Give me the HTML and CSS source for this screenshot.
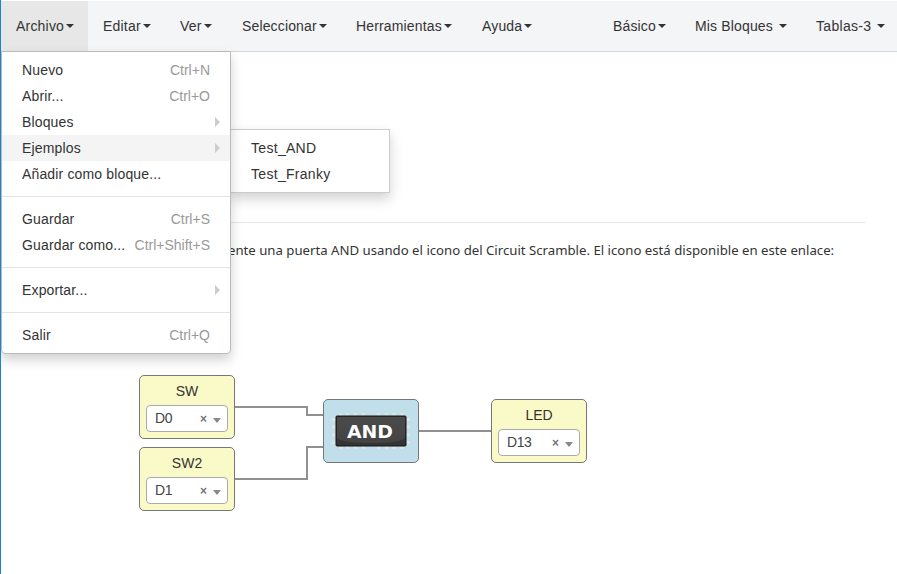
FILE: index.html
```html
<!DOCTYPE html>
<html lang="es">
<head>
<meta charset="utf-8">
<title>Editor de bloques</title>
<link rel="stylesheet" href="styles.css">
</head>
<body>
<div class="window">
  <nav class="navbar">
    <div class="nav-group">
      <a class="nav-item active">Archivo<i class="caret"></i></a>
      <a class="nav-item editar">Editar<i class="caret"></i></a>
      <a class="nav-item ver">Ver<i class="caret"></i></a>
      <a class="nav-item seleccionar">Seleccionar<i class="caret"></i></a>
      <a class="nav-item herramientas">Herramientas<i class="caret"></i></a>
      <a class="nav-item ayuda">Ayuda<i class="caret"></i></a>
    </div>
    <div class="nav-group right">
      <a class="nav-item basico">Básico<i class="caret"></i></a>
      <a class="nav-item bloques">Mis Bloques<i class="caret wide"></i></a>
      <a class="nav-item tablas">Tablas-3<i class="caret wide"></i></a>
    </div>
  </nav>

  <main class="canvas">
    <hr class="rule">
    <p class="note">ente una puerta AND usando el icono del Circuit Scramble. El icono está disponible en este enlace:</p>

    <svg class="wires" width="897" height="522" viewBox="0 52 897 522">
      <path d="M235 407H307V415H323M235 479H307V447H323M419 431H491"/>
    </svg>
    <div class="node io sw">
      <span class="label">SW</span>
      <div class="select"><span>D0</span><b>×</b><i class="arrow"></i></div>
    </div>
    <div class="node io sw2">
      <span class="label">SW2</span>
      <div class="select"><span>D1</span><b>×</b><i class="arrow"></i></div>
    </div>
    <div class="node gate">
      <svg width="94" height="62" viewBox="324 400 94 62">
        <defs>
          <linearGradient id="chip" x1="0" y1="0" x2="0" y2="1"><stop offset="0" stop-color="#4b4b4b"/><stop offset="1" stop-color="#434343"/></linearGradient>
        </defs>
        <path class="pins" d="M341 413V449M347.500 413V449M355.500 413V449M363.500 413V449M378.500 413V449M386.500 413V449M394 413V449M402 413V449M332 419.500H410M332 427H410M332 435H410M332 442.500H410"/>
        <rect x="336" y="416" width="70" height="30" rx="1" fill="#343434"/>
        <path d="M337 417H405V438Q400 443 371 443Q342 443 337 438Z" fill="url(#chip)"/>
        <rect x="336" y="416" width="70" height="30" rx="1" fill="none" stroke="#151515"/>
        <text class="gate-name" x="347" y="437.500" textLength="46" lengthAdjust="spacingAndGlyphs">AND</text>
      </svg>
    </div>
    <div class="node io led">
      <span class="label">LED</span>
      <div class="select"><span>D13</span><b>×</b><i class="arrow"></i></div>
    </div>
  </main>

  <div class="submenu">
    <div class="submenu-item">Test_AND</div>
    <div class="submenu-item">Test_Franky</div>
  </div>
  <div class="menu">
    <div class="menu-item"><span>Nuevo</span><kbd>Ctrl+N</kbd></div>
    <div class="menu-item"><span>Abrir...</span><kbd>Ctrl+O</kbd></div>
    <div class="menu-item"><span>Bloques</span><i class="more"></i></div>
    <div class="menu-item hover"><span>Ejemplos</span><i class="more"></i></div>
    <div class="menu-item"><span>Añadir como bloque...</span></div>
    <div class="divider"></div>
    <div class="menu-item"><span>Guardar</span><kbd>Ctrl+S</kbd></div>
    <div class="menu-item"><span>Guardar como...</span><kbd>Ctrl+Shift+S</kbd></div>
    <div class="divider"></div>
    <div class="menu-item"><span>Exportar...</span><i class="more"></i></div>
    <div class="divider"></div>
    <div class="menu-item"><span>Salir</span><kbd>Ctrl+Q</kbd></div>
  </div>
</div>
</body>
</html>
```
FILE: styles.css
```css
* { box-sizing: border-box; }
body {
  margin: 0;
  background: #fff;
  color: #333;
  font: 14px/20px "Liberation Sans", Arial, sans-serif;
}
.window {
  position: relative;
  height: 574px;
  overflow: hidden;
  border-left: 1px solid #1883d7;
}
.navbar {
  display: flex;
  justify-content: space-between;
  height: 52px;
  padding-top: 1px;
  border-bottom: 1px solid #d3d6da;
  background: #f4f5f7 content-box;
}
.nav-group { display: flex; }
.nav-item {
  display: flex;
  align-items: center;
  padding-left: 15px;
  letter-spacing: 0.15px;
  white-space: nowrap;
}
.active { width: 87px; background: #e7e7e7; }
.editar { width: 77px; }
.ver { width: 62px; }
.seleccionar { width: 114px; }
.herramientas { width: 126px; }
.ayuda { width: 80px; }
.basico { width: 82px; }
.bloques { width: 121px; }
.tablas { width: 96px; letter-spacing: 0.3px; }
.active, .editar, .ver { letter-spacing: 0.2px; }
.caret {
  margin-left: 2px;
  border: 4px solid transparent;
  border-top-color: #333;
  border-bottom: 0;
}
.caret.wide { margin-left: 6px; }

.canvas { padding-top: 170px; }
.rule {
  width: 836px;
  height: 1px;
  margin: 0 0 0 29px;
  border: 0;
  background: #e7e7e7;
}
.note {
  margin: 17px 0 0 227px;
  font-family: "Noto Sans", sans-serif;
  font-size: 13.2px;
  white-space: nowrap;
}
.wires { position: absolute; top: 52px; left: -1px; }
.wires path { fill: none; stroke: #909090; stroke-width: 2; }
.node {
  position: absolute;
  width: 96px;
  height: 64px;
  border: 1px solid #777;
  border-radius: 5px;
}
.io {
  display: flex;
  flex-direction: column;
  align-items: center;
  padding-top: 5px;
  background: #fafac8;
}
.sw { left: 138px; top: 375px; }
.sw2 { left: 138px; top: 447px; }
.gate { left: 322px; top: 399px; background: #c0dfeb; }
.gate svg { display: block; }
.led { left: 490px; top: 399px; }
.label { height: 24px; }
.select {
  display: flex;
  align-items: center;
  width: 82px;
  height: 27px;
  padding: 0 6px 0 8px;
  border: 1px solid #aaa;
  border-radius: 4px;
  background: #fff;
  color: #444;
}
.select span { flex: 1; margin-top: -1px; letter-spacing: -0.4px; }
.select b { margin-right: 6px; color: #777; font-size: 12px; }
.arrow { border: 4px solid transparent; border-top: 5px solid #888; border-bottom: 0; margin-top: 3px; }
.pins { fill: none; stroke: #e0e4e5; stroke-width: 3; }
.gate-name { fill: #fff; font: bold 18px "DejaVu Sans", sans-serif; }

.menu {
  position: absolute;
  left: 0;
  top: 51px;
  width: 230px;
  height: 303px;
  padding-top: 5px;
  border: 1px solid #bbb;
  border-radius: 0 0 4px 4px;
  background: #fff;
  box-shadow: 0 6px 12px rgba(0, 0, 0, .18);
}
.menu-item {
  display: flex;
  justify-content: space-between;
  align-items: center;
  height: 26px;
  padding: 0 20px;
  white-space: nowrap;
}
.menu-item span { letter-spacing: 0.15px; }
.menu-item.hover { background: #f4f4f4; }
.menu-item kbd { color: #999; font: inherit; }
.more { margin-right: -10px; border: 5px solid transparent; border-left-color: #ccc; border-right: 0; }
.divider { height: 1px; margin: 9px 0; background: #e3e3e3; }
.submenu {
  position: absolute;
  left: 229px;
  top: 129px;
  width: 160px;
  height: 64px;
  padding-top: 5px;
  border: 1px solid #ccc;
  background: #fff;
  box-shadow: 0 6px 12px rgba(0, 0, 0, .18);
}
.submenu-item { height: 26px; padding: 3px 20px; letter-spacing: 0.3px; }
```
